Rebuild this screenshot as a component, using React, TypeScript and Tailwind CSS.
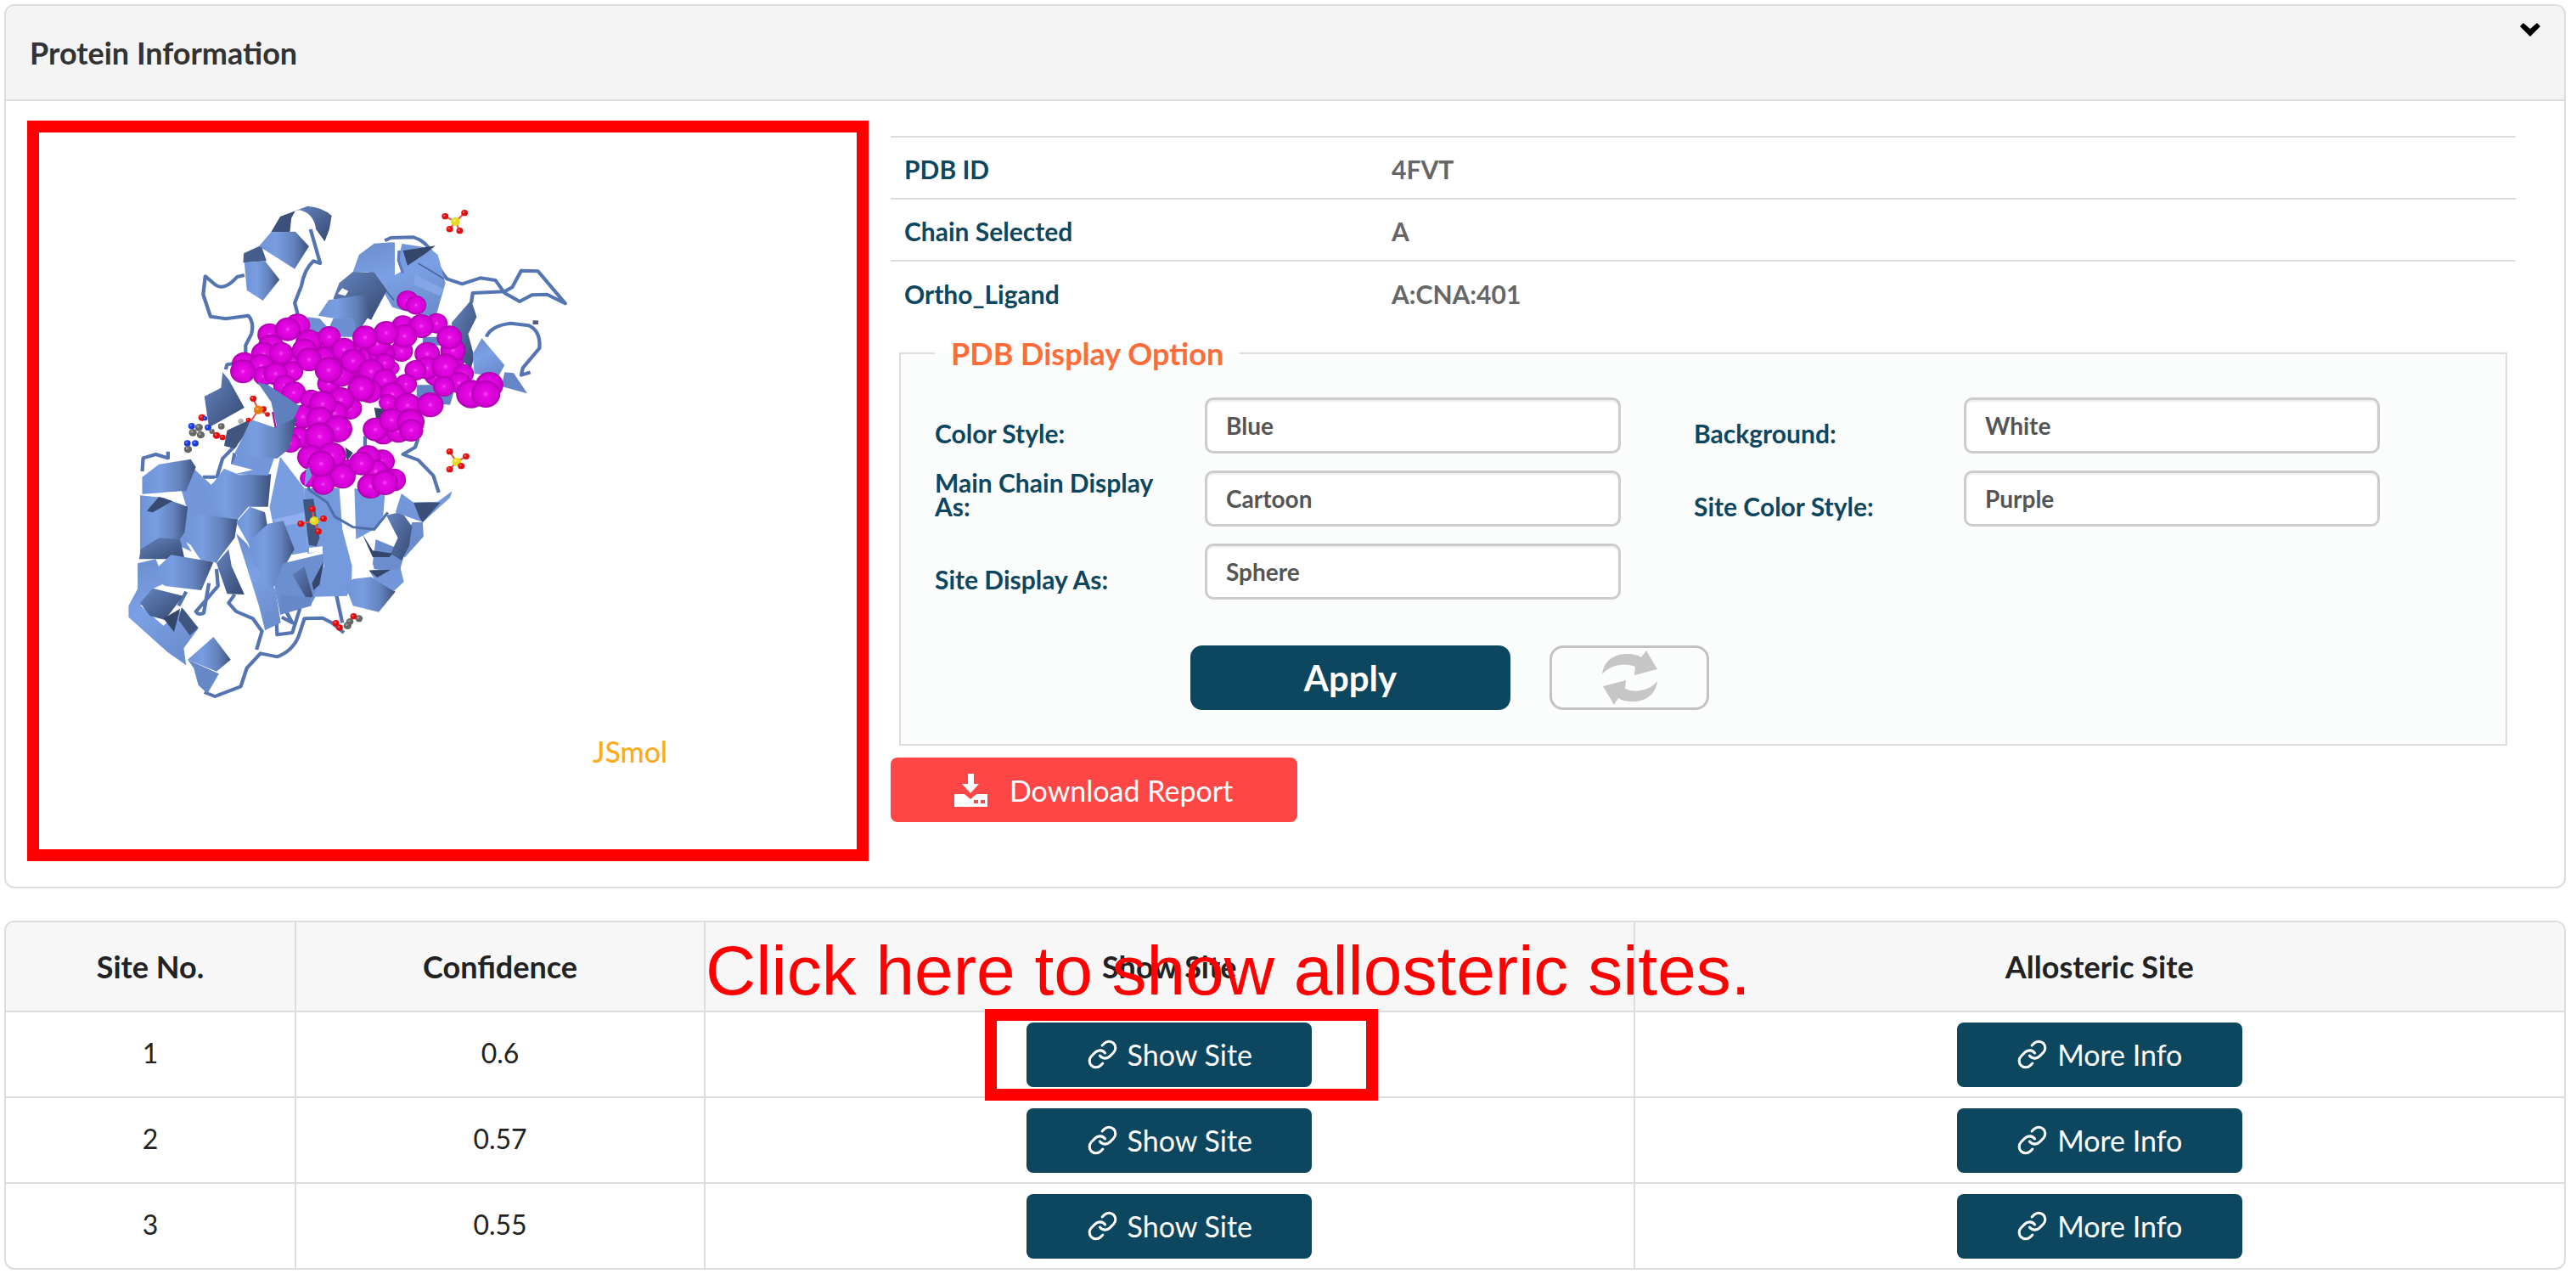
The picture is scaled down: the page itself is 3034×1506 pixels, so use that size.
// Protein information panel with the structure viewer, display options and predicted site list

import React, { useState } from "react";
import { Link } from "lucide-react";

const proteinInfo = [
  { label: "PDB ID", value: "4FVT" },
  { label: "Chain Selected", value: "A" },
  { label: "Ortho_Ligand", value: "A:CNA:401" },
];

const sites = [
  { id: 1, confidence: 0.6 },
  { id: 2, confidence: 0.57 },
  { id: 3, confidence: 0.55 },
];

interface SelectFieldProps {
  id: string;
  label: string;
  options: string[];
}

function SelectField({ id, label, options }: SelectFieldProps) {
  const [value, setValue] = useState(options[0]);

  return (
    <div className="flex items-end">
      <label
        htmlFor={id}
        className="w-[318px] shrink-0 pr-10 pb-[10px] text-[30px] leading-7 font-bold text-[#0d465f]"
      >
        {label}
      </label>
      <select
        id={id}
        value={value}
        onChange={(e) => setValue(e.target.value)}
        className="h-[66px] w-[490px] appearance-none rounded-[10px] border-3 border-[#ccc] bg-white pl-[22px] text-[28px] font-bold text-[#555] shadow-[inset_0_2px_2px_rgba(0,0,0,0.07)]"
      >
        {options.map((option) => (
          <option key={option}>{option}</option>
        ))}
      </select>
    </div>
  );
}

function SiteButton({ children }: { children: React.ReactNode }) {
  return (
    <button className="flex h-[76px] w-[336px] items-center justify-center gap-[11px] rounded-[8px] bg-[#0d465f] text-[34px] text-white">
      <Link className="size-[37px]" strokeWidth={2} />
      {children}
    </button>
  );
}

export default function App() {
  return (
    <div className="bg-white pt-[5px] pr-3 pb-3 pl-[5px] font-['Lato','Carlito',sans-serif]">
      <section className="rounded-[12px] border-2 border-[#ddd]">
        <header className="flex items-start justify-between rounded-t-[10px] border-b-2 border-[#ddd] bg-[#f4f4f4] pr-7 pl-7">
          <h2 className="py-[35px] text-[36px] leading-10 font-bold text-[#333]">
            Protein Information
          </h2>
          <button aria-label="Collapse" className="mt-5">
            <svg viewBox="0 0 24 16" className="h-4 w-6">
              <path d="M0 4 4 0 12 7 20 0 24 4 12 16Z" fill="#000" />
            </svg>
          </button>
        </header>

        <div className="flex items-start gap-[26px] pt-[23px] pr-[57px] pb-[30px] pl-[25px]">
          <div className="h-[872px] w-[991px] shrink-0 border-[14px] border-[#ff0000] pt-16 pl-[84px]">
            <ProteinDrawing />
            <p className="mt-[25px] ml-[568px] text-[34px] leading-10 font-medium text-[#ffa91c]">
              JSmol
            </p>
          </div>

          <div className="grow pt-[18px]">
            <table className="w-full text-left text-[30px] font-bold">
              <tbody>
                {proteinInfo.map((row) => (
                  <tr key={row.label} className="h-[73px] border-t-2 border-[#ddd]">
                    <th className="w-[590px] pt-1 pl-4 font-bold text-[#0d465f]">{row.label}</th>
                    <td className="pt-1 text-[#666]">{row.value}</td>
                  </tr>
                ))}
              </tbody>
            </table>

            <fieldset className="mx-[10px] mt-[14px] border-2 border-[#ddd] bg-[#fbfdfd] px-10 pb-10">
              <legend className="px-[19px] text-[36px] leading-11 font-bold text-[#ff6b39]">
                PDB Display Option
              </legend>
              <div className="grid grid-cols-2 gap-y-5 pt-[30px] pr-[22px]">
                <SelectField id="color-style" label="Color Style:" options={["Blue", "Green", "Red"]} />
                <SelectField id="background" label="Background:" options={["White", "Black"]} />
                <SelectField
                  id="main-chain"
                  label="Main Chain Display As:"
                  options={["Cartoon", "Ribbon", "Trace"]}
                />
                <SelectField
                  id="site-color"
                  label="Site Color Style:"
                  options={["Purple", "Yellow", "Orange"]}
                />
                <SelectField id="site-display" label="Site Display As:" options={["Sphere", "Stick"]} />
              </div>
              <div className="mt-[54px] flex gap-[46px] pl-[301px]">
                <button className="h-[76px] w-[377px] rounded-[14px] bg-[#0d465f] text-[42px] leading-none font-bold text-white">
                  Apply
                </button>
                <button
                  aria-label="Reset"
                  className="flex h-[76px] w-[188px] items-center justify-center rounded-[16px] border-3 border-[#c2c2c2]"
                >
                  <RefreshIcon />
                </button>
              </div>
            </fieldset>

            <button className="mt-[14px] flex h-[76px] w-[479px] items-center gap-[26px] rounded-[8px] bg-[#ff4646] pl-[75px] text-[34px] text-white">
              <DownloadIcon />
              Download Report
            </button>
          </div>
        </div>
      </section>

      <table className="mt-[38px] w-full table-fixed border-separate border-spacing-0 rounded-[12px] border-2 border-[#ddd] text-center text-[#222]">
        <thead>
          <tr className="h-[106px] text-[36px]">
            <th className="w-[342px] rounded-tl-[10px] border-r-2 border-b-2 border-[#ddd] bg-[#f7f7f7]">
              Site No.
            </th>
            <th className="w-[16%] border-r-2 border-b-2 border-[#ddd] bg-[#f7f7f7]">Confidence</th>
            <th className="relative border-r-2 border-b-2 border-[#ddd] bg-[#f7f7f7]">
              Show Site
              <span className="absolute top-4 left-0 font-['Liberation_Sans',sans-serif] text-[82px] leading-none font-normal whitespace-nowrap text-[#ff0000]">
                Click here to show allosteric sites.
              </span>
            </th>
            <th className="rounded-tr-[10px] border-b-2 border-[#ddd] bg-[#f7f7f7]">
              Allosteric Site
            </th>
          </tr>
        </thead>
        <tbody>
          {sites.map((site, index) => {
            const line = index < sites.length - 1 ? "h-[101px] border-b-2" : "h-[99px]";
            return (
              <tr key={site.id} className="text-[32px]">
                <td className={`border-r-2 border-[#ddd] pb-1 ${line}`}>{site.id}</td>
                <td className={`border-r-2 border-[#ddd] pb-1 ${line}`}>{site.confidence}</td>
                <td className={`border-r-2 border-[#ddd] ${line}`}>
                  <div className="relative mx-auto w-fit">
                    <SiteButton>Show Site</SiteButton>
                    {index === 0 && (
                      <div className="pointer-events-none absolute -top-4 -right-[78px] -bottom-4 -left-[49px] border-[14px] border-[#ff0000]" />
                    )}
                  </div>
                </td>
                <td className={`border-[#ddd] ${line}`}>
                  <div className="mx-auto w-fit">
                    <SiteButton>More Info</SiteButton>
                  </div>
                </td>
              </tr>
            );
          })}
        </tbody>
      </table>
    </div>
  );
}

function RefreshIcon() {
  return (
    <svg viewBox="0 0 65 64" className="h-16 w-[65px]" fill="#c6c6c6">
      <path d="M0 28C2 12 14 4 29 4c8 0 12 1 17 4L52 0l13 22-27 7 1-10C28 14 10 16 0 28Z" />
      <path d="M65 36C63 52 51 60 36 60c-8 0-12-1-17-4L14 64 1 42l27-7-1 10c11 5 28 3 38-9Z" />
    </svg>
  );
}

function DownloadIcon() {
  return (
    <svg viewBox="0 0 39 39" className="size-[39px]" fill="#fff">
      <path d="M16 0h7v12h6L19 23 9 12h7Z" />
      <path
        fillRule="evenodd"
        d="M0 24h12l7 6 7-6h13v15H0ZM23 31v4h5v-4ZM31 31v4h5v-4Z"
      />
    </svg>
  );
}

// Residues of the selected site, back to front: x, y, radius
const spheres = [
  [1076, 482, 36], [965, 492, 38], [980, 402, 36], [1008, 418, 34], [1025, 492, 42],
  [690, 560, 46], [700, 610, 46], [720, 695, 38], [820, 590, 46], [860, 600, 46],
  [780, 640, 46], [930, 640, 24], [840, 690, 46], [540, 620, 46], [1130, 625, 36],
  [525, 522, 40], [617, 490, 42], [655, 548, 44], [585, 503, 42], [722, 530, 38],
  [530, 565, 44], [506, 590, 42], [442, 626, 42], [600, 620, 44], [497, 632, 42],
  [563, 588, 40], [640, 578, 42], [505, 668, 34], [437, 652, 42], [600, 652, 36],
  [545, 660, 40], [575, 702, 38], [605, 727, 40], [655, 610, 42], [770, 575, 42],
  [760, 665, 42], [800, 615, 42], [720, 647, 46], [960, 580, 38], [895, 590, 44],
  [880, 555, 44], [970, 527, 42], [910, 516, 42], [840, 532, 42], [905, 622, 34],
  [860, 652, 44], [905, 682, 40], [855, 722, 42], [828, 712, 46], [1130, 578, 42],
  [1118, 532, 42], [1045, 590, 42], [1075, 665, 40], [1045, 640, 40], [1105, 635, 46],
  [1006, 648, 36], [975, 697, 36], [1165, 660, 34], [1150, 692, 38], [1100, 705, 36],
  [1250, 700, 46], [1190, 732, 50], [1238, 732, 48], [930, 732, 42], [915, 762, 30],
  [980, 772, 44], [1055, 770, 44], [900, 870, 40], [950, 862, 42], [874, 857, 42],
  [928, 824, 42], [990, 830, 46], [992, 860, 40], [662, 752, 36], [790, 782, 40],
  [760, 752, 44], [740, 800, 44], [700, 767, 46], [635, 812, 42], [690, 820, 44],
  [750, 855, 48], [622, 885, 38], [594, 905, 34], [690, 882, 50], [730, 950, 48],
  [660, 955, 44], [786, 995, 32], [655, 1030, 30], [765, 1022, 44], [702, 1050, 38],
  [695, 978, 46], [896, 970, 42], [850, 955, 42], [875, 1005, 42], [828, 977, 42],
  [935, 1035, 40], [858, 1057, 44], [905, 1045, 44],
];

const oxygen = "#e00d0d";
const sulfur = "#e6dc1e";
const carbon = "#666";
const nitrogen = "#1a3be0";

// Ligand and solvent atoms: x, y, radius, colour
const atoms: [number, number, number, string][] = [
  [1104, 104, 11, oxygen], [1168, 92, 11, oxygen], [1138, 123, 15, sulfur],
  [1119, 149, 11, oxygen], [1152, 155, 11, oxygen],
  [1119, 935, 11, oxygen], [1173, 952, 11, oxygen], [1142, 972, 15, sulfur],
  [1119, 998, 11, oxygen], [1157, 986, 11, oxygen],
  [666, 1138, 11, oxygen], [703, 1172, 11, oxygen], [672, 1180, 15, sulfur],
  [628, 1190, 11, oxygen], [686, 1217, 11, oxygen],
  [471, 748, 11, oxygen], [505, 785, 10, oxygen], [488, 788, 15, "#e87909"],
  [518, 804, 8, oxygen], [455, 823, 8, oxygen], [430, 828, 9, "#aaa"],
  [302, 815, 12, oxygen], [312, 818, 8, nitrogen], [268, 845, 11, nitrogen],
  [292, 850, 13, carbon], [272, 868, 13, carbon], [298, 876, 13, carbon],
  [322, 850, 11, nitrogen], [335, 864, 9, carbon], [366, 846, 11, carbon],
  [350, 878, 12, oxygen], [370, 885, 10, oxygen], [254, 906, 11, nitrogen],
  [280, 906, 11, nitrogen], [256, 927, 13, carbon],
  [820, 1525, 12, carbon], [802, 1517, 11, oxygen], [790, 1536, 12, carbon],
  [782, 1550, 13, carbon], [744, 1541, 11, oxygen], [756, 1557, 11, oxygen],
];

function ProteinDrawing() {
  return (
    <svg
      viewBox="0 0 1568 1860"
      preserveAspectRatio="none"
      className="h-[620px] w-[560px]"
      role="img"
      aria-label="Structure of 4FVT"
    >
      <defs>
        <linearGradient id="ribbon">
          <stop offset="0" stopColor="#6f93d6" />
          <stop offset="0.35" stopColor="#789de1" />
          <stop offset="0.7" stopColor="#6382bd" />
          <stop offset="1" stopColor="#3d527d" />
        </linearGradient>
        <linearGradient id="shade" x1="0" y1="0" x2="1" y2="1">
          <stop offset="0" stopColor="#6484c0" />
          <stop offset="1" stopColor="#364970" />
        </linearGradient>
        <linearGradient id="light" x1="0" y1="0" x2="0.4" y2="1">
          <stop offset="0" stopColor="#6a8ccb" />
          <stop offset="0.5" stopColor="#7ba0e5" />
          <stop offset="1" stopColor="#6c8fd0" />
        </linearGradient>
        <radialGradient id="sphere">
          <stop offset="0" stopColor="#f64ff6" />
          <stop offset="0.2" stopColor="#e60be6" />
          <stop offset="0.75" stopColor="#d800d8" />
          <stop offset="1" stopColor="#ac00ac" />
        </radialGradient>
      </defs>

      {/* loops behind the helices */}
      <g fill="none" stroke="#5474b2" strokeWidth="12" strokeLinejoin="round">
        <path d="M442 312 418 318Q375 370 345 345L313 316 306 380 330 458 380 466 455 455Q475 480 465 520L446 560V590" />
        <path d="M660 150 692 270 670 262Q640 290 630 350L608 410 618 450" />
        <path d="M380 645 385 628 420 622" />
        <path d="M905 190 925 180 1000 178Q1050 195 1065 250 1090 300 1110 325L1160 343 1220 322 1270 330 1300 375 1350 405 1390 382 1440 380 1500 412 1410 298 1355 296 1325 355 1300 370 1195 375 1190 410" />
        <path d="M1240 530Q1255 490 1320 482L1380 490Q1420 510 1415 570L1360 640 1355 665 1385 655" />
        <path d="M105 1005 108 958 150 945 190 958 190 935" />
        <path d="M350 1030 370 960 415 910M305 1025H345M403 980 410 940" />
        <path d="M1015 890 1005 920 965 945 1015 965 1065 1020 1083 1080M840 880V920" />
        <path d="M410 1440 390 1470 415 1500 470 1525 500 1570 482 1635" />
        <path d="M310 1785 345 1800 430 1765 450 1700 495 1648 550 1660Q600 1640 620 1590L640 1525 700 1523 730 1540 770 1575M745 1440 765 1540" />
        <path d="M350 1350 355 1410 315 1460 282 1500Q290 1515 308 1505L325 1400M250 1430 225 1480" />
        <path d="M548 1540 550 1582 600 1575 625 1490M565 1520 600 1540 580 1500" />
      </g>

      {/* upper helices */}
      <path d="M610 85 650 68Q700 72 730 102L722 150 707 193 678 150Q672 95 625 82Z" fill="url(#shade)" />
      <path d="M610 85 560 105 530 160H592L597 110Z" fill="#3d507a" />
      <path d="M530 160 610 158 655 210 608 290 490 210Z" fill="url(#ribbon)" />
      <path d="M490 210 440 235 438 268 515 262 500 215Z" fill="#465d8d" />
      <path d="M442 268 510 262 558 328 503 402 450 365Z" fill="url(#ribbon)" />
      <path d="M800 300 820 240 870 200 930 196 1050 215 1080 240 1105 340 1070 470 930 425 900 370 850 300Z" fill="url(#light)" />
      <path d="M938 196 962 200 950 250 958 300 938 312Z" fill="#fff" />
      <path d="M952 225 950 260 965 305" fill="none" stroke="#5c7dbc" strokeWidth="9" />
      <path d="M965 225 1072 208 1040 235 980 278Z" fill="#34466a" />
      <path d="M1015 270 1100 325M880 330 935 400" stroke="#4c679f" strokeWidth="5" />
      <path d="M1005 310 1100 360 1085 385 1000 345Z" fill="#84a5e6" />
      <path d="M735 395 755 340 800 300 870 302 912 365 860 470 790 430Z" fill="url(#shade)" />
      <path d="M750 378 765 358 785 368 775 385Z" fill="#fff" />
      <path d="M685 455 720 400 840 380 862 440 820 510 740 465Z" fill="url(#ribbon)" />
      <path d="M650 460 690 465 720 500 735 465 800 465 815 530H660Z" fill="#6d90d2" />
      <path d="M1125 480 1190 400 1208 460 1180 520 1200 600 1190 640 1140 600Z" fill="url(#shade)" />
      <path d="M1225 535 1300 630 1280 670 1200 660 1195 590Z" fill="url(#light)" />
      <path d="M1300 655 1330 658 1375 730 1290 705Z" fill="#6586c6" />
      <path d="M1030 530H1130V560H1030ZM1010 700 1140 700 1120 770 1010 760Z" fill="#5f83c4" />
      <path d="M870 780 940 790 880 840Z" fill="#34466a" />
      <path d="M1393 472h18v14h-18Z" fill="#545880" />

      {/* lower domain */}
      <g transform="translate(0 840)">
        <path d="M230 165 275 155 330 210 350 300 420 345 350 490 230 430Z" fill="#7397da" />
        <path d="M105 185 160 140 265 122 282 150 250 235 105 245Z" fill="url(#ribbon)" />
        <path d="M98 250 175 258 255 290 245 380 220 420 98 450Z" fill="url(#ribbon)" />
        <path d="M170 240 235 235 250 288 185 262Z" fill="#fff" />
        <path d="M120 305 160 255 205 270 140 310Z" fill="#374a71" />
        <path d="M300 240 340 205 375 155 425 178 530 175 520 290 455 290 412 345 350 305Z" fill="url(#ribbon)" />
        <path d="M400 140 425 90 560 95 540 120 520 180 410 175 470 160Z" fill="#7397da" />
        <path d="M240 400 290 315 420 335 410 400 350 485 300 480Z" fill="url(#ribbon)" />
        <path d="M250 415 265 425 295 475 280 470Z" fill="#fff" />
        <path d="M95 475 100 440 160 400 230 405 245 475Z" fill="url(#shade)" />
        <path d="M90 490 150 475 180 560 140 580 100 640 175 710 240 650 290 720 242 790 250 850 190 805 60 680 60 640 90 580Z" fill="url(#light)" />
        <path d="M130 530 200 460 340 485 300 585 180 570Z" fill="url(#ribbon)" />
        <path d="M150 572 240 590 235 608 170 600Z" fill="#fff" />
        <path d="M98 630 140 578 240 605 180 690 130 675Z" fill="url(#shade)" />
        <path d="M235 645 290 718 262 745 225 690Z" fill="#40557f" />
        <path d="M175 685 230 650 210 732Z" fill="#34466a" />
        <path d="M255 830 340 750 397 830 350 872Z" fill="url(#ribbon)" />
        <path d="M255 830 358 880 320 950 290 920 275 860Z" fill="#6788c6" />
        <path d="M350 490 390 440 400 500 442 600 385 598Z" fill="url(#shade)" />
        <path d="M415 385 450 420 545 585 562 700 510 727 490 640Z" fill="url(#light)" />
        <path d="M560 113 640 225 650 450 600 460 535 345 525 290Z" fill="#789de1" />
        <path d="M535 335 640 310V345L560 360Z" fill="#91aff0" />
        <path d="M415 345 460 290 510 310 520 370 460 430Z" fill="url(#ribbon)" />
        <path d="M455 415 520 350 570 340 607 440 575 500 535 580 470 490Z" fill="url(#ribbon)" />
        <path d="M540 565 570 490 705 455 700 560 660 640 560 670Z" fill="#6c8fd0" />
        <path d="M640 225 755 225 765 370 797 500 795 570 780 605 670 608 705 500 700 450 650 455Z" fill="#7499dc" />
        <path d="M655 435 700 430V452H655Z" fill="#fff" />
        <path d="M635 265 670 262 690 400 680 430 655 425Z" fill="#405680" />
        <path d="M600 530 640 502 668 605 650 620Z" fill="url(#shade)" />
        <path d="M665 560 703 483 690 565 670 585Z" fill="#34466a" />
        <path d="M562 600 660 610 663 640 560 672Z" fill="#6788c8" />
        <path d="M805 225 905 250 900 320 870 370 810 405Z" fill="#7499dc" />
        <path d="M775 570 800 545 860 538 940 590 885 662 800 640Z" fill="url(#ribbon)" />
        <path d="M853 515 955 500 968 555 935 588 870 545Z" fill="#7397da" />
        <path d="M853 515 925 512 880 540Z" fill="#34466a" />
        <path d="M865 490 875 405 930 430 975 440 955 512 870 510Z" fill="#6b8dce" />
        <path d="M995 345 1030 345 1033 395 970 470 960 440Z" fill="#6b8dce" />
        <path d="M910 320 960 308 995 360 985 430 960 480 925 455 948 400Z" fill="url(#shade)" />
        <path d="M830 385 865 445 930 455 920 468 865 468Z" fill="#34466a" />
        <path d="M960 243 1000 275 1080 272 1127 235 1120 258 1030 345 940 310Z" fill="#7397da" />
        <path d="M1000 275 1088 275 1030 345 1020 330Z" fill="#3b4f78" />
        <path d="M775 80 800 100 780 130Z" fill="#34466a" />
        <path
          d="M645 160 655 230 715 275 740 325 800 362 870 370 915 310"
          fill="none"
          stroke="#4f6fab"
          strokeWidth="9"
        />
      </g>

      {spheres.map(([cx, cy, r], i) => (
        <circle key={i} cx={cx} cy={cy} r={r} fill="url(#sphere)" />
      ))}

      {/* strands in front of the site */}
      <path d="M310 740 365 710 370 655 390 680 442 780 325 850Z" fill="url(#shade)" />
      <path d="M375 915 385 860 465 820 440 880 410 925Z" fill="#405680" />
      <path d="M485 690 520 700 625 775 590 850 550 850 530 760Z" fill="#5f80bd" />
      <path d="M408 945 465 822 540 850 615 815 590 925 550 960Z" fill="url(#ribbon)" />
      <path d="M535 795 545 850" stroke="#a010a0" strokeWidth="6" />
      <path d="M645 1000 655 990 665 1020 640 1060Z" fill="#7397da" />

      <g fill="none" stroke="#e2574c" strokeWidth="6">
        <path d="M1104 104 1138 123 1168 92M1119 149 1138 123 1152 155" />
        <path d="M1119 935 1142 972 1173 952M1119 998 1142 972" />
        <path d="M666 1138 672 1180 703 1172M628 1190 672 1180 686 1217" />
        <path d="M471 748 488 788 518 804M488 788 465 825" />
      </g>
      {atoms.map(([cx, cy, r, fill], i) => (
        <g key={i}>
          <circle cx={cx} cy={cy} r={r} fill={fill} />
          <circle cx={cx - r / 4} cy={cy - r / 4} r={r / 3} fill="#fff" opacity="0.35" />
        </g>
      ))}
    </svg>
  );
}
